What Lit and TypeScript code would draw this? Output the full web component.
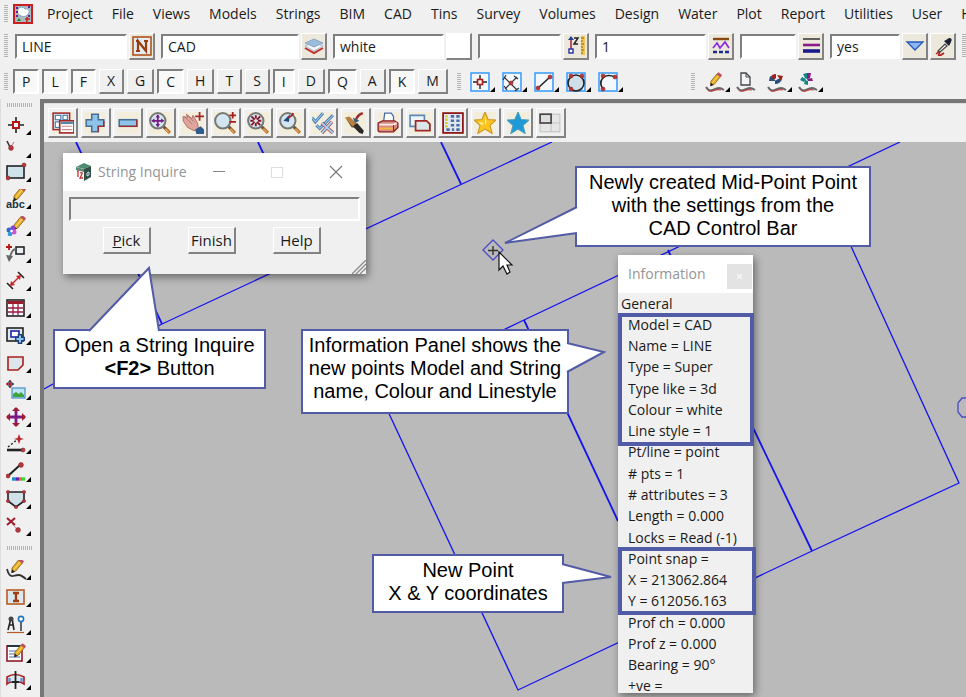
import { LitElement, html, svg, css, nothing, TemplateResult, SVGTemplateResult } from "lit";
import { customElement } from "lit/decorators.js";
import { classMap } from "lit/directives/class-map.js";
import { styleMap } from "lit/directives/style-map.js";

type Art = SVGTemplateResult;

const pencil = svg`<path d="M4 12 L13 1 L18 5 L9 16 L4 18Z" fill="#e9ad22" stroke="#7a5410" stroke-width="1"/><path d="M6.500 14 L15.500 3" stroke="#f9dc7c" stroke-width="1.400"/><path d="M12 2 L15 -1 L20 3 L18 6Z" fill="#b9525e"/><path d="M3 19 L4 14 L8 17Z" fill="#222"/>`;
const lens = svg`<path d="M13 13 L19 19" stroke="#b5702a" stroke-width="3"/><path d="M13 13.500 L18 18.500" stroke="#e8b070" stroke-width="1"/><path d="M12 12 L15 15" stroke="#555" stroke-width="2"/><circle cx="8" cy="8" r="7" fill="#d3e6f0" stroke="#777" stroke-width="1.800"/>`;
const squiggle = svg`<path d="M1 15 Q4 20 8 18 T14 16 T19 18" fill="none" stroke="#666" stroke-width="2"/><path d="M3 18.500 Q6 20 9 18.500 T16 18" fill="none" stroke="#c04040" stroke-width="1.200"/>`;
const star = "M10 0 L12.800 6.800 L20 7.400 L14.500 12.200 L16.500 19.500 L10 15.500 L3.500 19.500 L5.500 12.200 L0 7.400 L7.200 6.800Z";
const dot = (x: number, y: number, r = 2): Art => svg`<circle cx=${x} cy=${y} r=${r} fill="#b5383c" stroke="#8a2424" stroke-width=".6"/>`;

const side: Record<string, Art> = {
  point: svg`<path d="M10 2 V18 M2 10 H18" stroke="#222" stroke-width="1.600"/><rect x="7" y="7" width="6" height="6" fill="#fff" stroke="#b01818" stroke-width="2"/>`,
  vertex: svg`<path d="M1 3 L4 9" stroke="#333" stroke-width="1.600"/><path d="M4 10 L8 4" stroke="#c66" stroke-width="1"/>${dot(5, 10, 2.4)}`,
  rectangle: svg`<rect x="1" y="4" width="17" height="12" fill="#cfe2ea" stroke="#222" stroke-width="1.600"/>${dot(18, 3)}${dot(2, 16)}`,
  text: svg`<g transform="translate(5 -2) scale(.75)">${pencil}</g><text x="0" y="19" font-family="Liberation Sans" font-size="11" font-weight="700" fill="#1b3146">abc</text>`,
  paint: svg`<g transform="translate(5 0) scale(.75)">${pencil}</g><circle cx="3" cy="14" r="2.500" fill="#36c"/><circle cx="7" cy="12" r="2.500" fill="#84c"/><circle cx="8" cy="16" r="2.500" fill="#c5c"/><circle cx="4" cy="18" r="2.300" fill="#39d"/><circle cx="5.500" cy="15" r="1.300" fill="#fff"/>`,
  leader: svg`<path d="M0 4 H6 M3 1 V7" stroke="#b01818" stroke-width="1.800"/><rect x="10" y="4" width="8" height="7" fill="#e9f1f5" stroke="#222" stroke-width="1.600"/><path d="M10 6 Q6 6 4 14" fill="none" stroke="#666" stroke-width="1.800"/><path d="M0 12 L7 13 L3 19Z" fill="#666"/>`,
  dimension: svg`<path d="M1 12 L7 18 M12 1 L18 7" stroke="#222" stroke-width="1.600"/><path d="M5 14 L14 5" stroke="#c22" stroke-width="1.400"/><path d="M4 15 L5 10 L9 14Z M15 4 L10 5 L14 9Z" fill="#c22"/>`,
  grid: svg`<rect x="1" y="2" width="17" height="16" fill="#fff" stroke="#222" stroke-width="1.600"/><rect x="2" y="3" width="15" height="3" fill="#9c1c2c"/><path d="M2 10 H17 M2 14 H17 M7 5 V17 M12 5 V17" stroke="#9c1c3c" stroke-width="1.300"/>`,
  zone: svg`<rect x="1" y="3" width="16" height="13" fill="#dce8ec" stroke="#222" stroke-width="1.600"/><rect x="5" y="6" width="8" height="6" fill="#fff" stroke="#22a" stroke-width="1.600"/><path d="M14 9 V19 M9 14 H19" stroke="#1c3f78" stroke-width="4.600"/><path d="M14 10.500 V17.500 M10.500 14 H17.500" stroke="#8cc8ee" stroke-width="2"/>`,
  polygon: svg`<path d="M2 4 H17 V12 L12 17 H2Z" fill="#dce6ea" stroke="#a62020" stroke-width="1.600"/>`,
  image: svg`<path d="M4 0 V8 M0 4 H8" stroke="#b01818" stroke-width="1.600"/><circle cx="4" cy="4" r="2.500" fill="none" stroke="#233a66"/><rect x="6" y="8" width="13" height="10" fill="#bfe3f7" stroke="#4a8fc4" stroke-width="1.200"/><path d="M7 17 V14 L10 12 L13 14 L15 12 L18 15 V17Z" fill="#3fa33a"/>`,
  move: svg`<path d="M10 1 V19 M1 10 H19" stroke="#7b1a86" stroke-width="2.800"/><path d="M10 0 L14 4 H6Z M10 20 L14 16 H6Z M0 10 L4 6 V14Z M20 10 L16 6 V14Z" fill="#a01c30"/>`,
  extend: svg`<path d="M2 13 L12 5" stroke="#222" stroke-width="1.500" stroke-dasharray="2 2"/><path d="M1 16 H16" stroke="#222" stroke-width="2.600"/><path d="M13 0 L14.500 4 L18 5 L14.500 6 L13 10 L11.500 6 L8 5 L11.500 4Z" fill="#b5282c"/>${dot(17, 16)}`,
  colour: svg`<path d="M2 14 L14 3" stroke="#222" stroke-width="2"/>${dot(15, 3, 2.4)}${dot(2, 14)}<path d="M6 17 H10" stroke="#28c" stroke-width="3.400"/><path d="M10 17 H13" stroke="#62a" stroke-width="3.400"/><path d="M13 17 H16" stroke="#e63" stroke-width="3.400"/><path d="M16 17 H19" stroke="#3d3" stroke-width="3.400"/>`,
  shield: svg`<path d="M2 3 H18 V12 L10 18 L2 12Z" fill="#cfe2ea" stroke="#222" stroke-width="1.600"/>${dot(2, 3, 1.6)}${dot(18, 3, 1.6)}${dot(2, 12, 1.6)}${dot(18, 12, 1.6)}${dot(10, 18, 1.6)}`,
  remove: svg`<path d="M1 2 L9 9 M9 2 L1 9" stroke="#a01c2c" stroke-width="2"/><path d="M6 8 L12 14" stroke="#b99" stroke-width="1"/>${dot(12, 14, 2.4)}`,
  draw: svg`<g transform="translate(3 -1) scale(.75)">${pencil}</g><path d="M1 9 Q3 17 7 16 T13 15 T20 19" fill="none" stroke="#333" stroke-width="1.800"/>`,
  info: svg`<rect x="1" y="3" width="17" height="14" fill="#dbe9ef" stroke="#b85a24" stroke-width="1.600"/><path d="M7 6 H13 M7 14 H13 M10 6 V14" stroke="#a03c10" stroke-width="2.400"/>`,
  survey: svg`<path d="M5 3 L2 15 M6 3 L8 15 M3 10 H7" stroke="#222" stroke-width="1.600"/><circle cx="5" cy="4" r="2.500" fill="#444"/><path d="M15 6 V16" stroke="#345" stroke-width="1.600"/><circle cx="15" cy="4" r="2.600" fill="#fff" stroke="#2277bb" stroke-width="1.600"/><path d="M1 17.500 H18" stroke="#b85a24" stroke-width="1.200"/>`,
  form: svg`<rect x="1" y="3" width="15" height="15" fill="#fff" stroke="#8c1c24" stroke-width="1.600"/><path d="M1 3 H16" stroke="#234" stroke-width="2"/><path d="M3 8 H14 M3 11 H14 M3 14 H14" stroke="#4a6fb0" stroke-width="1.200"/><g transform="translate(6 1) scale(.7)">${pencil}</g>`,
  section: svg`<path d="M1 7 Q9 2 18 7 V14 Q15 12 13 12 H6 Q3 12 1 14Z" fill="#dfe9f3" stroke="#a62020" stroke-width="1.600"/><path d="M3.500 8 V12 M15.500 8 V12" stroke="#6a8ad8" stroke-width="2.400"/><path d="M9.500 1 V19 M6 12 H13" stroke="#222" stroke-width="1.800"/>`,
};

const snaps: [string, Art][] = [
  ["Point snap", svg`<path d="M10 3 V17 M3 10 H17" stroke="#222" stroke-width="1.400"/><rect x="7.500" y="7.500" width="5" height="5" fill="#fff" stroke="#b01818" stroke-width="1.600"/>`],
  ["Intersection snap", svg`<path d="M2 5 L15 18 M3 17 L15 5 M1 8 L4 3 M12 4 L16 7 M13 19 L17 16 M2 14 L5 18" stroke="#333" stroke-width="1.200"/>${dot(9, 11)}`],
  ["Line snap", svg`<path d="M4 16 L16 5" stroke="#222" stroke-width="1.600"/>${dot(4, 16)}${dot(16, 5)}`],
  ["Circle snap", svg`<circle cx="10" cy="11" r="8" fill="#cfdfe8" stroke="#222" stroke-width="1.600"/>${dot(5, 4)}${dot(16, 4)}${dot(5, 17)}`],
  ["Arc snap", svg`<path d="M5 17 Q0 10 6 5 Q10 2 17 5" fill="none" stroke="#222" stroke-width="1.600"/>${dot(5, 4)}${dot(17, 5)}${dot(5, 17)}`],
];

const edits: [string, Art, boolean][] = [
  ["Edit string", svg`<g transform="translate(3 1) scale(.7)">${pencil}</g>${squiggle}`, true],
  ["New string", svg`<path d="M5 1 H10 L14 5 V13 H5Z" fill="#f2f5f7" stroke="#444" stroke-width="1.300"/><path d="M10 1 V5 H14" fill="none" stroke="#444"/>${squiggle}`, false],
  ["Swap string", svg`<path d="M3 7 Q4 2 9 2 V6 L7 8Z" fill="#a02020"/><path d="M15 6 Q14 12 8 12 V9 L11 7Z" fill="#26507c"/><path d="M2 9 L9 9 L3 4Z" fill="#26507c"/><path d="M16 4 L10 3 L14 9Z" fill="#a02020"/>${squiggle}`, true],
  ["Rotate string", svg`<path d="M9 1 L5 2 L7 6 L9 7Z M2 8 L6 10 L8 7 L4 5Z" fill="#188"/><path d="M9 1 H13 L12 6 L9 7Z M14 6 L15 9 L10 9 L9 7Z" fill="#82208c"/><path d="M7 8 L10 9 L10 13 L6 12Z" fill="#158a72"/>${squiggle}`, true],
];

const viewArt: [string, Art][] = [
  ["View menu", svg`<rect x="1" y="1" width="15" height="15" fill="#e4ecf3" stroke="#a02828" stroke-width="1.400"/><rect x="3" y="3" width="5" height="4" fill="#fff" stroke="#4478aa"/><rect x="10" y="3" width="4" height="4" fill="#fff" stroke="#4478aa"/><rect x="3" y="9" width="4" height="5" fill="#fff" stroke="#4478aa"/><rect x="7" y="8" width="13" height="11" fill="#fff" stroke="#a02828" stroke-width="1.500"/><path d="M8 10 H19" stroke="#58a" stroke-width="2"/><path d="M9 13 H18 M9 16 H18" stroke="#c88"/>`],
  ["Add model", svg`<path d="M7 2 H13 V7 H18 V13 H13 V18 H7 V13 H2 V7 H7Z" fill="#8ec3ea" stroke="#4a6c94" stroke-width="1.400"/><path d="M13 18 V13 H18 V8" fill="none" stroke="#a02828" stroke-width="1.200"/>`],
  ["Remove model", svg`<rect x="2" y="7" width="16" height="6" fill="#8ec3ea" stroke="#4a6c94" stroke-width="1.400"/><path d="M2 13 H18 V7" fill="none" stroke="#a02828" stroke-width="1.200"/>`],
  ["Fit view", svg`${lens}<path d="M8 3 V13 M3 8 H13" stroke="#7b1a86" stroke-width="1.600"/><path d="M8 2 L10 5 H6Z M8 14 L10 11 H6Z M2 8 L5 6 V10Z M14 8 L11 6 V10Z" fill="#7b1a86"/>`],
  ["Pan", svg`<path d="M1 4 L5 5 L4 2 L9 6 L10 3 L14 10 L15 15 L11 17 L5 14 L1 8Z" fill="#dfa59c" stroke="#b0726a" stroke-width=".9"/><path d="M2 4 L9 11 M5 3 L11 9" stroke="#b0726a" stroke-width=".8"/><path d="M12 16 L17 13 L20 16 L20 20 H13Z" fill="#2e5d8c"/><path d="M16 0 V8 M12 4 H20" stroke="#a02828" stroke-width="1.600"/>`],
  ["Zoom in or out", svg`${lens}<path d="M17 0 V6 M14 3 H20 M14 9 H20" stroke="#a81c1c" stroke-width="1.600"/>`],
  ["Zoom extents", svg`${lens}<path d="M4 4 L7 7 M12 4 L9 7 M4 12 L7 9 M12 12 L9 9 M8 3 V6 M8 10 V13 M3 8 H6 M10 8 H13" stroke="#8c1020" stroke-width="1.700"/>`],
  ["Previous zoom", svg`${lens}<path d="M10 2 L4 8 L9 9Z" fill="#1e4a80"/><path d="M8 5 Q12 4 13 1" stroke="#a02828" fill="none" stroke-width="1.600"/>`],
  ["Snap toggles", svg`<path d="M0 5 L3 9 L10 1 M4 12 L7 15 L19 3" fill="none" stroke="#3f74ac" stroke-width="2.600"/><path d="M0 5 L3 9 L10 1 M4 12 L7 15 L19 3" fill="none" stroke="#9cc8ec" stroke-width="1"/><path d="M9 10 L19 19 M18 9 L9 19" stroke="#a04858" stroke-width="3.200"/><path d="M9 10 L19 19 M18 9 L9 19" stroke="#a8d0f0" stroke-width="1.800"/>`],
  ["Redraw", svg`<path d="M1 5 L5 4 L12 11 L9 14Z" fill="#b87f3c"/><path d="M1 5 L9 14 L7 14Z" fill="#7c4a1c"/><path d="M8 13 L12 10 L18 17 L17 20 L14 19Z" fill="#2a2a2a"/><path d="M11 7 Q12 3 17 1" stroke="#a02828" fill="none" stroke-width="2.200"/><path d="M8 5 L14 8 L10 10Z" fill="#345c84"/>`],
  ["Print", svg`<path d="M7 1 H13 L15 4 V9 H6Z" fill="#fff" stroke="#4a6fb0" stroke-width="1.200"/><path d="M1 10 L5 8 H16 L19 10 V14 L15 18 H2 L1 17Z" fill="#d88a84" stroke="#8a2020" stroke-width="1.200"/><path d="M2 11.500 H15 L18 10" stroke="#fbeee0" stroke-width="1.600" fill="none"/><path d="M2 15 H15" stroke="#f5b840" stroke-width="1.800"/><path d="M15 12 V17" stroke="#8a2020"/>`],
  ["Copy view", svg`<path d="M1 3 H14 V13 H1Z" fill="#eef4f8" stroke="#5a88b4" stroke-width="1.500"/><path d="M6 8 H16 L19 11 V17 H6Z" fill="#dce6ea" stroke="#a02828" stroke-width="1.600"/>`],
  ["Grid layout", svg`<rect x="1" y="1" width="18" height="18" fill="#dfe7f0" stroke="#8c1414" stroke-width="1.600"/><path d="M4 3 V14" stroke="#d8c020" stroke-width="2" stroke-dasharray="2 1"/><path d="M8 4 H11 M13 4 H16 M8 8 H11 M13 8 H16 M8 12 H11 M13 12 H16 M4 16 H7 M9 16 H11 M13 16 H16" stroke="#4a6ca4" stroke-width="2.400"/>`],
  ["Favourites", svg`<path d=${star} fill="#fcc51e" stroke="#c8962c" stroke-width="1"/><path d="M10 4 L11.500 9 L10 12Z M4 9 L9 10 L7 12Z" fill="#fff0a8"/>`],
  ["Saved views", svg`<path d=${star} fill="#1e9ad6" stroke="#4a9cc4" stroke-width="1"/>`],
  ["Split view", svg`<rect x="0" y="0" width="20" height="20" fill="#f0f0f0"/><rect x="1" y="2" width="18" height="16" fill="#e6e6e6" stroke="#c4c4c4"/><path d="M11 2 V18 M1 10 H19" stroke="#c4c4c4"/><rect x="1" y="2" width="10" height="8" fill="#dedede" stroke="#444" stroke-width="1.500"/>`],
];

const fieldArt: Record<string, Art> = {
  name: svg`<rect x="1" y="1" width="18" height="18" fill="#e4eef2" stroke="#b0521c" stroke-width="1.600"/><path d="M6 15 V5 L14 15 V5 M4 5 H7 M4 15 H8 M12 5 H16" fill="none" stroke="#9a3c0c" stroke-width="2.200"/>`,
  model: svg`<path d="M1 12 L10 17 L19 12" fill="none" stroke="#c03030" stroke-width="2"/><path d="M1 10 L10 15 L19 10 L10 6Z" fill="#f4f6f8" stroke="#a8b8c8"/><path d="M1 7 L10 11 L19 7 L10 3Z" fill="#9cbcdc" stroke="#8aa8c8"/>`,
  swatch: svg``,
  height: svg`<path d="M5 2 V14" stroke="#a02040" stroke-width="1.500"/><path d="M5 0 L8 4 H2Z" fill="#24408c"/><rect x="3" y="13" width="4" height="4" fill="#fff" stroke="#2030a0" stroke-width="1.400"/><path d="M8 2 H12 L8 8 H12" fill="none" stroke="#222" stroke-width="1.500"/><rect x="15" y="0" width="4" height="19" fill="#f0c552"/><path d="M15 2 H18 M15 5 H17 M15 8 H18 M15 11 H17 M15 14 H18 M15 17 H17" stroke="#8a6414"/>`,
  linestyle: svg`<path d="M2 3 H18" stroke="#8a4a14" stroke-width="2.400"/><path d="M2 12 L6 7 L9 12 L14 6 L18 12" fill="none" stroke="#8a2be2" stroke-width="1.700"/><path d="M2 16 H18" stroke="#1a2a90" stroke-width="2.400" stroke-dasharray="4 2"/>`,
  weight: svg`<path d="M2 3 H19" stroke="#333" stroke-width="1.500"/><path d="M2 9 H19" stroke="#8a1a8a" stroke-width="2.600"/><path d="M2 15 H19" stroke="#1a1a8c" stroke-width="3.600"/>`,
  choice: svg`<path d="M2 6 H18 L10 14Z" fill="#8cb6f4" stroke="#2458b8" stroke-width="1.300"/>`,
  dropper: svg`<path d="M3 18 Q8 14 6 18 T11 17" stroke="#b02020" fill="none" stroke-width="1.600"/><path d="M5 15 L12 8 L14 10 L7 16Z" fill="#f4f4f4" stroke="#444" stroke-width="1.200"/><path d="M11 5 L16 10 L18 6 Q20 2 16 2 L13 4Z" fill="#1a1f33"/>`,
};

interface Field { label: string; value: string; width: number; art: string; extra?: string }

const fields: Field[] = [
  { label: "Name", value: "LINE", width: 112, art: "name" },
  { label: "Model", value: "CAD", width: 138, art: "model" },
  { label: "Colour", value: "white", width: 111, art: "swatch" },
  { label: "Height", value: "", width: 83, art: "height" },
  { label: "Line style", value: "1", width: 111, art: "linestyle" },
  { label: "Weight", value: "", width: 56, art: "weight" },
  { label: "Tinable", value: "yes", width: 70, art: "choice", extra: "dropper" },
];

const menus = ["Project", "File", "Views", "Models", "Strings", "BIM", "CAD", "Tins", "Survey", "Volumes", "Design", "Water", "Plot", "Report", "Utilities", "User", "Help"];
const toggles = "PLFXGCHTSIDQAKM";
const pressed = "PLFCIQK";

const info = [
  "Model = CAD", "Name = LINE", "Type = Super", "Type like = 3d", "Colour = white", "Line style = 1",
  "Pt/line = point", "# pts = 1", "# attributes = 3", "Length = 0.000", "Locks = Read (-1)",
  "Point snap =", "X = 213062.864", "Y = 612056.163",
  "Prof ch = 0.000", "Prof z = 0.000", "Bearing = 90°", "+ve =",
];

interface Callout { left: number; top: number; width: number; height: number; pointer: string; lines: (string | TemplateResult)[] }

const callouts: Callout[] = [
  { left: 9, top: 187, width: 213, height: 60, pointer: "36,2 96,-61 106,2", lines: ["Open a String Inquire", html`<b>&lt;F2&gt;</b> Button`] },
  { left: 257, top: 187, width: 268, height: 85, pointer: "266,14 303,23 266,43", lines: ["Information Panel shows the", "new points Model and String", "name, Colour and Linestyle"] },
  { left: 531, top: 24, width: 296, height: 81, pointer: "2,41 -70,77 2,67", lines: ["Newly created Mid-Point Point", "with the settings from the", "CAD Control Bar"] },
  { left: 328, top: 412, width: 192, height: 59, pointer: "190,10 239,23 190,29", lines: ["New Point", "X & Y coordinates"] },
];

@customElement("app-root")
export class AppRoot extends LitElement {
  static styles = css`
    :host {
      display: flex;
      flex-direction: column;
      min-height: 100vh;
      overflow: hidden;
      background: #f0f0f0;
      color: #1a1a1a;
      font: 14px/20px "Open Sans", "Noto Sans", sans-serif;
    }
    * { box-sizing: border-box; }
    button, input { font: inherit; color: inherit; margin: 0; border-radius: 0; }
    button { padding: 0; border: 0; background: none; display: flex; align-items: center; justify-content: center; flex: none; }
    svg { display: block; flex: none; }

    .grip { width: 4px; height: 18px; flex: none; background: repeating-linear-gradient(#b4b4b4 0 1px, #f0f0f0 1px 2px); }
    .grip.flat { width: 25px; height: 4px; margin-left: 3px; background: repeating-linear-gradient(90deg, #b4b4b4 0 1px, #f0f0f0 1px 2px); }

    .menubar { display: flex; align-items: center; height: 28px; padding-left: 4px; overflow: hidden; }
    .logo { margin: 0 14px 0 5px; }
    .menus { display: flex; gap: 19px; }

    .raised { background: #f0f0f0; border: 1px solid #fff; border-right: 2px solid #838383; border-bottom: 2px solid #838383; }
    .sunken { background: #f8f8f8; border: 2px solid #fff; border-top-color: #7f7f7f; border-left-color: #7f7f7f; }

    .fieldbar { display: flex; align-items: center; gap: 6px; height: 36px; padding-left: 4px; overflow: hidden; }
    .fieldbar .grip { margin-right: 1px; height: 24px; }
    .field { display: flex; align-items: center; gap: 2px; flex: none; }
    .field input { height: 25px; padding: 0 5px; background: #fff; outline: 0; }
    .field button { width: 26px; height: 27px; background: #ece9dc; }
    .field button.blank { background: #fff; }

    .togglebar { display: flex; align-items: center; height: 35px; padding-left: 4px; overflow: hidden; }
    .toggles { display: flex; gap: 3px; margin: 0 9px 0 5px; }
    .toggles button { height: 25px; padding: 0 7px; }
    .snaps { display: flex; gap: 6px; margin-left: 9px; }
    .edits { display: flex; gap: 5px; margin-left: 10px; }
    .spread { width: 67px; }

    .work { display: flex; flex: 1; }
    .tools { width: 40px; flex: none; padding: 4px 0 0 3px; border-left: 1px solid #ddd; }
    .group { display: grid; grid-auto-rows: 1fr; justify-items: start; padding-left: 2px; }
    .group.first { height: 26px; margin-top: 5px; }
    .group.short { height: 20px; }
    .group.main { height: 382px; }
    .group.last { height: 138px; }
    .grip.between { margin: 6px 0 6px 3px; }

    .view { flex: 1; min-width: 0; display: flex; flex-direction: column; border-left: 4px solid #777; border-top: 4px solid #777; }
    .viewbar { height: 39px; flex: none; padding: 4px; border-top: 1px solid #ddd; }
    .viewtools { display: flex; justify-content: space-between; width: 518px; }
    .viewtools button { width: 30px; height: 30px; }
    .viewtools svg { background: #f3eedb; }

    .canvas { flex: 1; position: relative; overflow: hidden; background: #bababa; min-height: 554px; }
    .plan { position: absolute; inset: 0; width: 100%; height: 100%; }
    .plan.over { pointer-events: none; }

    .window { position: absolute; background: #f0f0f0; box-shadow: 2px 3px 8px rgba(0, 0, 0, .45); overflow: hidden; }
    .title { display: flex; align-items: center; height: 38px; background: #fff; color: #949494; }
    .inquire { left: 19px; top: 11px; width: 303px; height: 121px; }
    .inquire .title { padding: 0 20px 0 12px; gap: 6px; }
    .inquire h2, .panel h2 { margin: 0; font: inherit; }
    .caption { display: flex; flex: 1; justify-content: space-between; padding-left: 16px; }
    .message { display: block; width: 291px; height: 24px; margin: 6px auto 0; background: #f0f0f0; outline: 0; }
    .actions { display: flex; gap: 37px; padding: 6px 0 0 40px; }
    .actions button { width: 48px; height: 27px; font-size: 15px; }
    .resize { position: absolute; right: 0; bottom: 0; }

    .panel { left: 574px; top: 113px; width: 135px; height: 438px; }
    .panel .title { padding-left: 10px; justify-content: space-between; }
    .panel .title button { width: 25px; height: 25px; margin: 5px 1px 0 0; background: #e3e3e3; }
    .rows { display: grid; grid-auto-rows: 1fr; align-items: center; height: 404px; margin: 0; padding: 0; list-style: none; white-space: nowrap; }
    .rows li { padding-left: 10px; }
    .rows .head { padding-left: 3px; }
    .mark { position: absolute; left: 574px; border: 4px solid #525ca6; }
    .mark.settings { top: 171px; width: 136px; height: 133px; }
    .mark.coords { top: 405px; width: 138px; height: 68px; }

    .callout { position: absolute; padding-top: 3px; border: 2px solid #525ca6; background: #fff; color: #000; font: 20px/23px "Liberation Sans", Arial, sans-serif; text-align: center; white-space: nowrap; }
    .callout svg { position: absolute; left: -2px; top: -2px; overflow: visible; }
  `;

  private flyout(art: Art, tri = true, boxed = false) {
    return html`<svg width="26" height="20" viewBox="0 0 26 20" aria-hidden="true">
      ${boxed ? svg`<rect x="1" y="1" width="18" height="18" fill="#f4f8fa" stroke="#3399ff" stroke-width="1.500"/>` : nothing}
      ${art}${tri ? svg`<path d="M25 15 V20 H20Z" fill="#000"/>` : nothing}
    </svg>`;
  }

  private icon(art: Art, size = 20) {
    return html`<svg width=${size} height=${size} viewBox="0 0 20 20" aria-hidden="true">${art}</svg>`;
  }

  private tool(name: string) {
    return html`<button aria-label=${name}>${this.flyout(side[name])}</button>`;
  }

  private menubar() {
    return html`<nav class="menubar">
      <span class="grip"></span>
      <svg class="logo" width="20" height="20" viewBox="0 0 20 20" aria-hidden="true">
        <rect x="1" y="1" width="18" height="18" fill="#a9bcc4" stroke="#c82020" stroke-width="2"/>
        <path d="M5 5 Q9 1 12 5 Q17 4 16 9 Q13 14 8 12 Q3 10 5 5Z" fill="#fff" stroke="#7ea8b4"/>
        <path d="M3 4 H5 M3 8 H5 M3 12 H5 M15 3 H17 M15 12 H17" stroke="#6a1a9a" stroke-width="2"/>
        <path d="M4 17 L6 14 L8 17Z" fill="#1a8a2a"/><path d="M14 13 V18 M12 15 H17" stroke="#d02020" stroke-width="1.500"/>
      </svg>
      <div class="menus">${menus.map((m) => html`<button>${m}</button>`)}</div>
    </nav>`;
  }

  private fieldbar() {
    return html`<div class="fieldbar"><span class="grip"></span>
      ${fields.map((f) => html`<div class="field">
        <input class="sunken" aria-label=${f.label} .value=${f.value} style=${styleMap({ width: `${f.width}px` })}>
        <button class=${classMap({ raised: true, blank: f.art === "swatch" })} aria-label="${f.label} list">${this.icon(fieldArt[f.art])}</button>
        ${f.extra ? html`<button class="raised" aria-label="Pick settings">${this.icon(fieldArt[f.extra])}</button>` : nothing}
      </div>`)}
      <span class="grip"></span>
    </div>`;
  }

  private togglebar() {
    return html`<div class="togglebar"><span class="grip"></span>
      <div class="toggles">${[...toggles].map((t) => {
        const on = pressed.includes(t);
        return html`<button class=${on ? "sunken" : "raised"} aria-pressed=${on}>${t}</button>`;
      })}</div>
      <span class="grip"></span>
      <div class="snaps">${snaps.map(([n, a]) => html`<button aria-label=${n}>${this.flyout(a, true, true)}</button>`)}</div>
      <span class="spread"></span>
      <span class="grip"></span>
      <div class="edits">${edits.map(([n, a, tri]) => html`<button aria-label=${n}>${this.flyout(a, tri)}</button>`)}</div>
    </div>`;
  }

  private sidebar() {
    const main = ["rectangle", "text", "paint", "leader", "dimension", "grid", "zone", "polygon", "image", "move", "extend", "colour", "shield", "remove"];
    const last = ["draw", "info", "survey", "form", "section"];
    return html`<aside class="tools">
      <div class="grip flat"></div>
      <div class="group first">${this.tool("point")}</div>
      <div class="group short">${this.tool("vertex")}</div>
      <div class="group main">${main.map((n) => this.tool(n))}</div>
      <div class="grip flat between"></div>
      <div class="group last">${last.map((n) => this.tool(n))}</div>
    </aside>`;
  }

  private plan() {
    return html`<svg class="plan" aria-hidden="true">
      <g transform="translate(-44 -142)" fill="none" stroke="#1414f0" stroke-width="1.300">
        <path d="M552 142 L162 324 M44 389 L162 324"/>
        <path d="M76 142 L162 324 M258 142 L310 254 M441 142 L461 184" stroke-width="1.800"/>
        <path d="M900 142 L524 320 L378 390 L518 690 L812 551 L959 483 L829 198"/>
        <path d="M524 320 L618 521 M668 250 L812 551" stroke-width="1.800"/>
        <path d="M962 398 H970 L975 403 V411 L970 417 H962 L958 412 V403Z" stroke="#4a4ac8"/>
        <path d="M493 240 L503 250 L493 260 L483 250Z" stroke="#4a4ac8"/>
        <path d="M493 246 V255 M488 250.500 H498" stroke="#333" stroke-width="1.400"/>
      </g>
    </svg>`;
  }

  private cursor() {
    return html`<svg class="plan over" aria-hidden="true"><path transform="translate(454 109)" d="M1 1 V19 L5 15 L9 23 L12 21 L9 14 H14Z" fill="#fff" stroke="#111" stroke-width="1.200"/></svg>`;
  }

  private inquire() {
    return html`<section class="window inquire">
      <div class="title">
        <svg width="17" height="20" viewBox="0 0 17 20" aria-hidden="true">
          <path d="M1 5 L9 1 L16 4 L9 7Z" fill="#4f8a72"/><path d="M9 7 L16 4 V15 L9 19Z" fill="#2f4f44"/>
          <path d="M1 5 L9 7 V19 L1 16Z" fill="#fff"/><path d="M1 5 L9 7 V10 L1 8Z" fill="#5a8a78"/>
          <path d="M2 9 H3 V15 M5 11 Q8 10 7 12 L5 16 H8" fill="none" stroke="#c83030" stroke-width="1.300"/><path d="M12 11 L14 10 V13 L12 14Z" fill="none" stroke="#cde"/>
        </svg>
        <h2>String Inquire</h2>
        <div class="caption">
          <button aria-label="Minimise"><svg width="20" height="20" viewBox="0 0 20 20"><path d="M4 9.500 H16" stroke="#888"/></svg></button>
          <button aria-label="Maximise"><svg width="20" height="20" viewBox="0 0 20 20"><rect x="4.500" y="5.500" width="11" height="10" fill="none" stroke="#ddd"/></svg></button>
          <button aria-label="Close"><svg width="20" height="20" viewBox="0 0 20 20"><path d="M4 4 L16 16 M16 4 L4 16" stroke="#777" stroke-width="1.100"/></svg></button>
        </div>
      </div>
      <input class="message sunken" aria-label="Message" readonly>
      <div class="actions">
        <button class="raised"><span><u>P</u>ick</span></button>
        <button class="raised">Finish</button>
        <button class="raised">Help</button>
      </div>
      <svg class="resize" width="14" height="14" viewBox="0 0 14 14" aria-hidden="true"><path d="M0 14 L14 0 M4 14 L14 4 M8 14 L14 8" stroke="#8c8c8c" stroke-width="1.300"/></svg>
    </section>`;
  }

  private panel() {
    return html`<section class="window panel">
      <div class="title"><h2>Information</h2>
        <button aria-label="Close"><svg width="9" height="9" viewBox="0 0 9 9"><path d="M2 2 L7 7 M7 2 L2 7" stroke="#f6f6f6" stroke-width="1.500"/></svg></button>
      </div>
      <ul class="rows"><li class="head">General</li>${info.map((r) => html`<li>${r}</li>`)}</ul>
    </section>
    <div class="mark settings"></div>
    <div class="mark coords"></div>`;
  }

  private callout(c: Callout) {
    return html`<div class="callout" style=${styleMap({ left: `${c.left}px`, top: `${c.top}px`, width: `${c.width}px`, minHeight: `${c.height}px` })}>
      <svg width="1" height="1" aria-hidden="true"><polyline points=${c.pointer} fill="#fff" stroke="#525ca6" stroke-width="2"/></svg>
      ${c.lines.map((l) => html`<div>${l}</div>`)}
    </div>`;
  }

  render() {
    return html`
      ${this.menubar()}${this.fieldbar()}${this.togglebar()}
      <div class="work">
        ${this.sidebar()}
        <main class="view">
          <div class="viewbar"><div class="viewtools">
            ${viewArt.map(([n, a]) => html`<button class="raised" aria-label=${n}>${this.icon(a, 22)}</button>`)}
          </div></div>
          <div class="canvas">
            ${this.plan()}${this.inquire()}${this.panel()}
            ${callouts.map((c) => this.callout(c))}
            ${this.cursor()}
          </div>
        </main>
      </div>`;
  }
}
